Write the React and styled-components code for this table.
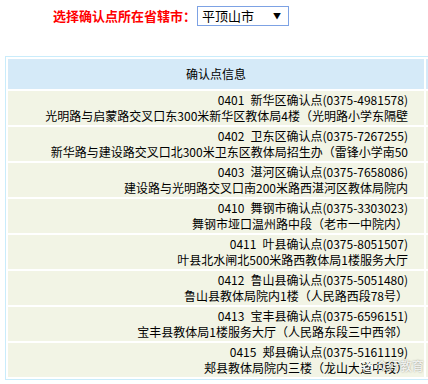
import React from 'react';
import styled, { createGlobalStyle } from 'styled-components';

const GlobalStyle = createGlobalStyle`
  html, body {
    margin: 0;
    padding: 0;
    background: #fff;
    overflow: hidden;
  }
  body {
    font-family: "Noto Sans CJK SC", "Liberation Sans", sans-serif;
    color: #000;
  }
`;

const sites = [
  { code: '0401', name: '新华区确认点', tel: '0375-4981578', addr: '光明路与启蒙路交叉口东300米新华区教体局4楼（光明路小学东隔壁' },
  { code: '0402', name: '卫东区确认点', tel: '0375-7267255', addr: '新华路与建设路交叉口北300米卫东区教体局招生办（雷锋小学南50' },
  { code: '0403', name: '湛河区确认点', tel: '0375-7658086', addr: '建设路与光明路交叉口南200米路西湛河区教体局院内' },
  { code: '0410', name: '舞钢市确认点', tel: '0375-3303023', addr: '舞钢市垭口温州路中段（老市一中院内）' },
  { code: '0411', name: '叶县确认点', tel: '0375-8051507', addr: '叶县北水闸北500米路西教体局1楼服务大厅' },
  { code: '0412', name: '鲁山县确认点', tel: '0375-5051480', addr: '鲁山县教体局院内1楼（人民路西段78号）' },
  { code: '0413', name: '宝丰县确认点', tel: '0375-6596151', addr: '宝丰县教体局1楼服务大厅（人民路东段三中西邻）' },
  { code: '0415', name: '郏县确认点', tel: '0375-5161119', addr: '郏县教体局院内三楼（龙山大道中段）' },
];

// Styles
const Page = styled.div`
  position: relative;
  width: 428px;
  height: 384px;
  overflow: hidden;
`;

const Picker = styled.div`
  display: flex;
  align-items: center;
  padding: 6px 0 0 53px;
  height: 20px;
`;

const PickerLabel = styled.label`
  font-size: 13px;
  font-weight: bold;
  color: #ff0000;
  line-height: 20px;
`;

const SelectBox = styled.div`
  box-sizing: border-box;
  width: 92px;
  height: 20px;
  margin-left: 1px;
  border: 1px solid #7da2e4;
  display: flex;
  align-items: center;
  justify-content: space-between;
  padding: 0 7px 0 4px;
  font-size: 13px;
  line-height: 18px;
  background: #fff;
`;

const Arrow = styled.span`
  font-size: 8px;
  line-height: 1;
  color: #000;
`;

const Table = styled.div`
  margin: 30px 0 0 5px;
  width: 640px;
  border: 1px solid #c9ecfb;
  padding: 2px;
  display: grid;
  grid-template-columns: 416px 1fr;
  gap: 2px;
`;

const HeadCell = styled.div`
  height: 30px;
  background: #d5eaf8;
  display: flex;
  align-items: center;
  justify-content: center;
  font-size: 12px;
  line-height: 16px;
`;

const Cell = styled.div`
  height: 34px;
  background: #f2f4e5;
  display: flex;
  flex-direction: column;
  justify-content: center;
  align-items: flex-end;
  padding-right: 16px;
  font-size: 12px;
  line-height: 16px;
  white-space: nowrap;
`;

const Code = styled.span`
  margin-right: 6px;
`;

const Blank = styled.div`
  background: ${p => (p.head ? '#d5eaf8' : '#f2f4e5')};
`;

const Watermark = styled.div`
  position: absolute;
  right: 4px;
  bottom: 10px;
  display: flex;
  align-items: center;
  gap: 3px;
  color: rgba(255, 255, 255, 0.9);
  font-size: 12px;
  text-shadow: 0 0 2px rgba(0, 0, 0, 0.45);
`;

const SiteRow = ({ code, name, tel, addr }) => (
  <>
    <Cell>
      <span>
        <Code>{code}</Code>
        {name}({tel})
      </span>
      <span>{addr}</span>
    </Cell>
    <Blank />
  </>
);

export default function App() {
  return (
    <Page>
      <GlobalStyle />
      <Picker>
        <PickerLabel>选择确认点所在省辖市：</PickerLabel>
        <SelectBox>
          <span>平顶山市</span>
          <Arrow>▼</Arrow>
        </SelectBox>
      </Picker>

      <Table>
        <HeadCell>确认点信息</HeadCell>
        <Blank head />
        {sites.map(site => (
          <SiteRow key={site.code} {...site} />
        ))}
      </Table>

      <Watermark>
        <svg width="14" height="12" viewBox="0 0 14 12">
          <ellipse cx="5.5" cy="5" rx="5" ry="4" fill="none" stroke="rgba(255,255,255,0.9)" strokeWidth="1.2" />
          <ellipse cx="9.5" cy="7.5" rx="4" ry="3.2" fill="none" stroke="rgba(255,255,255,0.9)" strokeWidth="1.2" />
        </svg>
        <span>众行教育</span>
      </Watermark>
    </Page>
  );
}
